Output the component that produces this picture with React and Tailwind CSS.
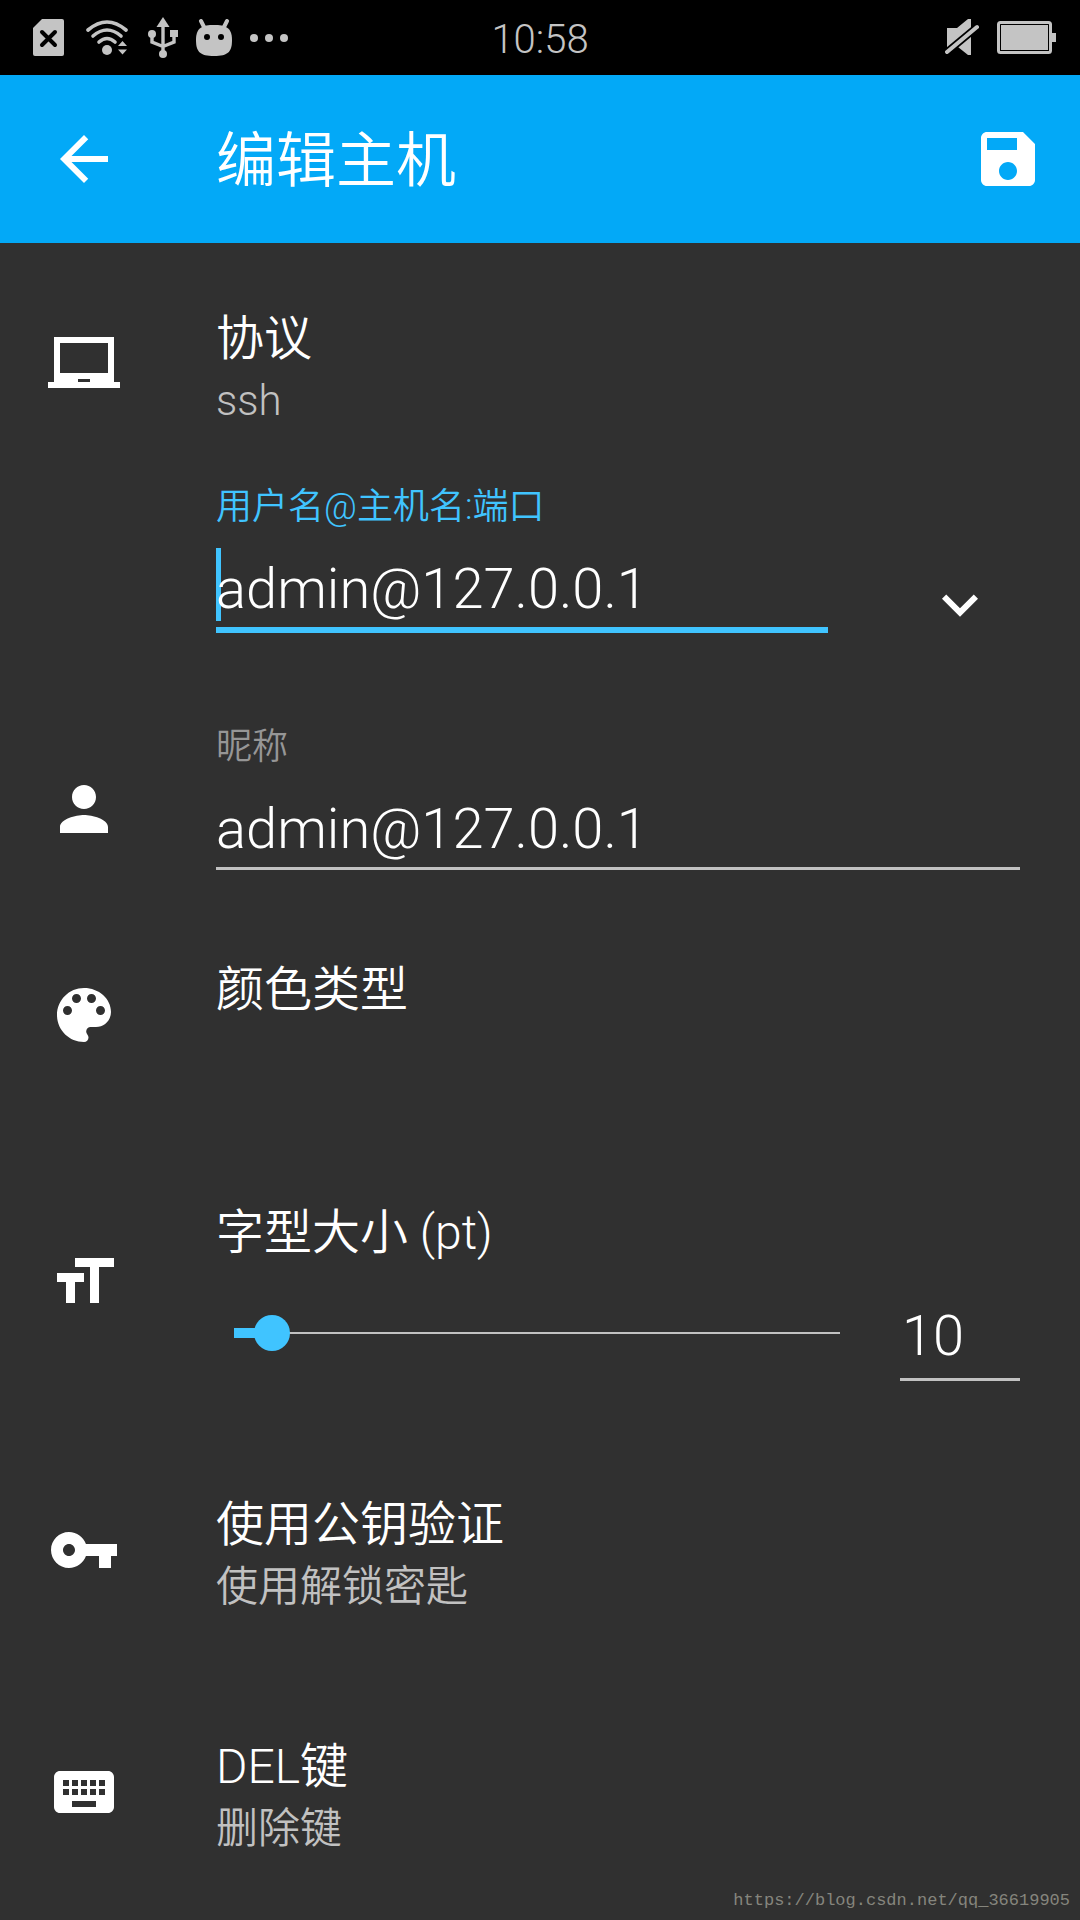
import { useState } from "react";

const fontStack = "font-['Roboto','Noto_Sans_CJK_SC',sans-serif]";

function Glyph({ d }) {
  return (
    <svg viewBox="0 0 24 24" className="size-[72px] shrink-0 fill-white" aria-hidden="true">
      <path d={d} />
    </svg>
  );
}

const paths = {
  back: "M20 11H7.83l5.59-5.59L12 4l-8 8 8 8 1.41-1.41L7.83 13H20v-2z",
  save: "M17 3H5c-1.11 0-2 .9-2 2v14c0 1.1.89 2 2 2h14c1.1 0 2-.9 2-2V7l-4-4zm-5 16c-1.66 0-3-1.34-3-3s1.34-3 3-3 3 1.34 3 3-1.34 3-3 3zm3-10H5V5h10v4z",
  laptop: "M22 18V3H2v15H0v2h24v-2h-2zm-8 0h-4v-1h4v1zm6-3H4V5h16v10z",
  expand: "M7.41 7.84L12 12.42l4.59-4.58L18 9.25l-6 6-6-6z",
  person: "M12 12c2.21 0 4-1.79 4-4s-1.79-4-4-4-4 1.79-4 4 1.79 4 4 4zm0 2c-2.67 0-8 1.34-8 4v2h16v-2c0-2.66-5.33-4-8-4z",
  palette:
    "M12 3c-4.97 0-9 4.03-9 9s4.03 9 9 9c.83 0 1.5-.67 1.5-1.5 0-.39-.15-.74-.39-1.01-.23-.26-.38-.61-.38-.99 0-.83.67-1.5 1.5-1.5H16c2.76 0 5-2.24 5-5 0-4.42-4.03-8-9-8zm-5.5 9c-.83 0-1.5-.67-1.5-1.5S5.67 9 6.5 9 8 9.67 8 10.5 7.33 12 6.5 12zm3-4C8.67 8 8 7.33 8 6.5S8.67 5 9.5 5s1.5.67 1.5 1.5S10.33 8 9.5 8zm5 0c-.83 0-1.5-.67-1.5-1.5S13.67 5 14.5 5s1.5.67 1.5 1.5S15.33 8 14.5 8zm3 4c-.83 0-1.5-.67-1.5-1.5S16.67 9 17.5 9s1.5.67 1.5 1.5-.67 1.5-1.5 1.5z",
  size: "M9 4v3h5v12h3V7h5V4H9zm-6 8h3v7h3v-7h3V9H3v3z",
  key: "M12.65 10C11.83 7.67 9.61 6 7 6c-3.31 0-6 2.69-6 6s2.69 6 6 6c2.61 0 4.83-1.67 5.65-4H17v4h4v-4h2v-4H12.65zM7 14c-1.1 0-2-.9-2-2s.9-2 2-2 2 .9 2 2-.9 2-2 2z",
  keyboard:
    "M20 5H4c-1.1 0-1.99.9-1.99 2L2 17c0 1.1.9 2 2 2h16c1.1 0 2-.9 2-2V7c0-1.1-.9-2-2-2zm-9 3h2v2h-2V8zm0 3h2v2h-2v-2zM8 8h2v2H8V8zm0 3h2v2H8v-2zm-1 2H5v-2h2v2zm0-3H5V8h2v2zm9 7H8v-2h8v2zm0-4h-2v-2h2v2zm0-3h-2V8h2v2zm3 3h-2v-2h2v2zm0-3h-2V8h2v2z",
};

function StatusBar() {
  return (
    <div className="grid h-[75px] grid-cols-[1fr_auto_1fr] items-center bg-black px-6 text-[#c4c4c4]">
      <div className="flex items-center gap-[18px] pl-[9px]">
        <svg viewBox="0 0 35 37" className="h-[37px] w-[35px] fill-current" aria-hidden="true">
          <path d="M9 0H29Q31 0 31 2V35Q31 37 29 37H2Q0 37 0 35V9Z" />
          <path d="M9 13L22 26M22 13L9 26" className="stroke-black stroke-[4]" strokeLinecap="round" />
        </svg>
        <svg viewBox="0 0 42 36" className="h-9 w-[42px] fill-current" aria-hidden="true">
          <g fill="none" stroke="currentColor" strokeWidth="3.6" strokeLinecap="round">
            <path d="M2 10Q21 -6 40 10" />
            <path d="M7 16Q21 4 35 16" />
            <path d="M13 22Q21 15 29 22" />
          </g>
          <circle cx="21" cy="30" r="5" />
          <path d="M32 26L36.500 21L41 26ZM32 29.500H41L36.500 34.500Z" />
        </svg>
        <svg viewBox="-2 0 32 41" className="h-[41px] w-8 fill-current" aria-hidden="true">
          <path d="M15 0L21.500 10H8.500Z" />
          <path d="M15 8V36M4 17V25L15 29.500L26 25V17" fill="none" stroke="currentColor" strokeWidth="3.400" />
          <circle cx="4" cy="17" r="4" />
          <rect x="22" y="13" width="8" height="7" />
          <circle cx="15" cy="37" r="4" />
        </svg>
        <svg viewBox="0 0 36 37" className="h-[37px] w-9 fill-current" aria-hidden="true">
          <path d="M5 2L8 8M31 2L28 8" stroke="currentColor" strokeWidth="4" strokeLinecap="round" />
          <path d="M18 6C29 6 36 8 36 21C36 33 32 37 18 37S0 33 0 21C0 8 7 6 18 6Z" />
          <circle cx="11" cy="18" r="3" className="fill-black" />
          <circle cx="25" cy="18" r="3" className="fill-black" />
        </svg>
        <svg viewBox="0 0 38 8" className="h-2 w-[38px] fill-current" aria-hidden="true">
          <circle cx="4" cy="4" r="4" />
          <circle cx="19" cy="4" r="4" />
          <circle cx="34" cy="4" r="4" />
        </svg>
      </div>
      <time className="pt-1 text-[40px] leading-[71px]">10:58</time>
      <div className="flex items-center justify-end gap-[18px]">
        <svg viewBox="0 0 34 37" className="h-[37px] w-[34px] fill-current" aria-hidden="true">
          <path d="M2 9H12L23 0H26V36H23L13 28H2Z" />
          <path d="M-4 38L38 3" fill="none" stroke="black" strokeWidth="7.500" />
          <path d="M2 33L32 8" fill="none" stroke="currentColor" strokeWidth="4" strokeLinecap="round" />
        </svg>
        <svg viewBox="0 0 59 33" className="h-[33px] w-[59px] fill-current" aria-hidden="true">
          <rect x="1.500" y="1.500" width="52" height="30" rx="2" fill="none" stroke="currentColor" strokeWidth="3" />
          <rect x="4" y="4" width="47" height="25" />
          <rect x="55" y="12" width="4" height="9" />
        </svg>
      </div>
    </div>
  );
}

function TextRow({ icon, title, subtitle, height }) {
  return (
    <button type="button" className={`flex w-full items-start text-left ${height}`}>
      <span className="w-[216px] shrink-0 pt-[59px] pl-12">
        <Glyph d={icon} />
      </span>
      <span className="flex-1 pt-[38px]">
        <span className="block text-[48px] leading-[64px]">{title}</span>
        {subtitle && <span className="block text-[42px] leading-[60px] text-[#c1c1c1]">{subtitle}</span>}
      </span>
    </button>
  );
}

export default function App() {
  const [host, setHost] = useState("admin@127.0.0.1");
  const [nick, setNick] = useState("admin@127.0.0.1");
  const [size, setSize] = useState(10);
  const min = 4;
  const max = 100;
  const percent = ((size - min) / (max - min)) * 100;

  return (
    <div className={`relative min-h-screen bg-[#303030] font-[350] text-white ${fontStack}`}>
      <StatusBar />
      <header className="flex h-[168px] items-center bg-[#03a9f7] pr-9">
        <div className="w-[216px] pl-12">
          <button type="button" aria-label="返回" className="block">
            <Glyph d={paths.back} />
          </button>
        </div>
        <h1 className="flex-1 pt-1.5 text-[60px] leading-[72px]">编辑主机</h1>
        <button type="button" aria-label="保存">
          <Glyph d={paths.save} />
        </button>
      </header>

      <main className="pt-[26px]">
        <TextRow icon={paths.laptop} title="协议" subtitle="ssh" height="min-h-[199px]" />

        <div className="flex min-h-[240px] items-start pr-15 pl-[216px]">
          <div className="flex-1">
            <label htmlFor="host" className="block text-[36px] leading-[78px] text-[#40c4ff]">
              用户名@主机名:端口
            </label>
            <div className="relative">
              <span className="absolute top-0.5 left-0 h-[73px] w-[5px] bg-[#40c4ff]" />
              <input
                id="host"
                value={host}
                onChange={(e) => setHost(e.target.value)}
                className="relative block h-[87px] w-full border-b-6 border-[#40c4ff] pt-1 text-[56px] outline-none"
              />
            </div>
          </div>
          <button type="button" aria-label="展开" className="mt-[103px] ml-[72px] flex w-[120px] justify-center">
            <Glyph d={paths.expand} />
          </button>
        </div>

        <div className="flex min-h-[212px] items-start pr-15">
          <span className="w-[216px] shrink-0 pt-[65px] pl-12">
            <Glyph d={paths.person} />
          </span>
          <div className="flex-1">
            <label htmlFor="nick" className="block text-[36px] leading-[78px] text-[#969696]">
              昵称
            </label>
            <input
              id="nick"
              value={nick}
              onChange={(e) => setNick(e.target.value)}
              className="block h-[84px] w-full border-b-3 border-[#c1c1c1] pt-1 text-[56px] outline-none"
            />
          </div>
        </div>

        <TextRow icon={paths.palette} title="颜色类型" height="min-h-[243px]" />

        <div className="flex min-h-[292px] items-start pr-15">
          <span className="w-[216px] shrink-0 pt-[83px] pl-12">
            <Glyph d={paths.size} />
          </span>
          <div className="flex-1 pt-[38px]">
            <label htmlFor="size" className="block text-[48px] leading-[64px]">
              字型大小 (pt)
            </label>
            <div className="flex items-start gap-[42px] pt-7">
              <div className="relative mt-[22px] h-9 flex-1">
                <div className="absolute inset-x-[18px] top-[17px] h-0.5 bg-[#c1c1c1]" />
                <div className="absolute inset-x-[18px] top-[13px] h-2.5">
                  <div className="h-full bg-[#40c4ff]" style={{ width: `${percent}%` }} />
                </div>
                <input
                  id="size"
                  type="range"
                  min={min}
                  max={max}
                  value={size}
                  onChange={(e) => setSize(Number(e.target.value))}
                  className="absolute inset-0 h-9 w-full appearance-none bg-transparent outline-none [&::-webkit-slider-thumb]:size-9 [&::-webkit-slider-thumb]:appearance-none [&::-webkit-slider-thumb]:rounded-full [&::-webkit-slider-thumb]:bg-[#40c4ff]"
                />
              </div>
              <input
                type="text"
                inputMode="numeric"
                aria-label="字型大小"
                value={size}
                onChange={(e) => setSize(Number(e.target.value) || min)}
                className="block h-[88px] w-[120px] border-b-3 border-[#c1c1c1] pl-0.5 text-[56px] outline-none"
              />
            </div>
          </div>
        </div>

        <TextRow icon={paths.key} title="使用公钥验证" subtitle="使用解锁密匙" height="min-h-[242px]" />
        <TextRow icon={paths.keyboard} title="DEL键" subtitle="删除键" height="min-h-[223px]" />
      </main>

      <span className="absolute right-2.5 bottom-[7px] font-['Liberation_Mono',monospace] text-[17px] leading-6 text-[#85857d]">
        https://blog.csdn.net/qq_36619905
      </span>
    </div>
  );
}
